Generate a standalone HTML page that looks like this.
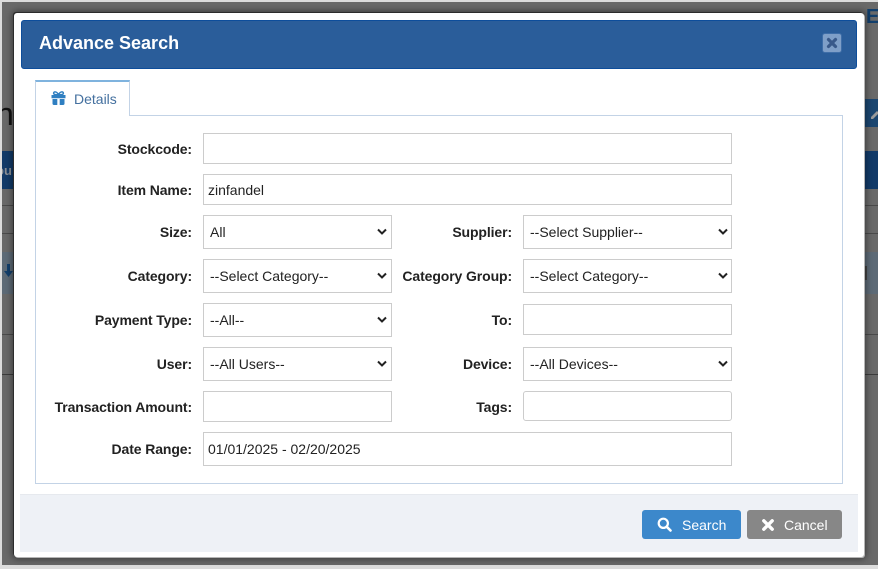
<!DOCTYPE html>
<html><head><meta charset="utf-8"><style>
html,body{margin:0;padding:0;width:878px;height:569px;overflow:hidden;background:#dcdcdc}
*{box-sizing:border-box}
body{font-family:"Liberation Sans",Arial,sans-serif;font-size:14px;color:#222;position:relative}
.a{position:absolute}
#bg{left:2px;top:2px;width:876px;height:563px;background:#696969;overflow:hidden}
#modal{left:14px;top:13px;width:850px;height:544px;background:#fff;border-radius:3px;box-shadow:-1px -1px 0 #2c2c2c,1px 1px 0 #b5b5b5,0 0 7px 2px rgba(0,0,0,.45)}
#hdr{left:21px;top:20px;width:836px;height:49px;background:#2a5d9a;border:1px solid #0d4d9b;border-radius:3px}
#ttl{left:39px;top:33px;font-size:18px;line-height:21px;font-weight:bold;color:#fff}
#x{left:822px;top:33px;width:20px;height:20px;background:#7f9fc8;border:1px solid #3f6ea8;border-radius:3px}
#pane{left:35px;top:115px;width:808px;height:369px;border:1px solid #c3d3e6;background:#fff}
#tab{left:35px;top:80px;width:95px;height:36px;background:#fff;border:1px solid #c3d3e6;border-top:2px solid #7fb3de;border-bottom:0}
#tabt{left:74px;top:91px;color:#44709f;font-size:14px;line-height:16px}
label{position:absolute;right:686px;font-weight:bold;font-size:14px;line-height:16px;color:#222;white-space:nowrap;letter-spacing:-.11px}
label.r{right:366px}
input,select{position:absolute;font-family:"Liberation Sans",Arial,sans-serif;font-size:14px;color:#222;background:#fff;border:1px solid #ccc;margin:0;outline:0}
input{padding:0 4px}
select{padding:0 0 0 6px;appearance:none;-webkit-appearance:none;border-radius:0}
.w{left:203px;width:529px}.l{left:203px;width:189px}.rr{left:523px;width:209px}
#foot{left:20px;top:494px;width:838px;height:58px;background:#eef1f6;border-top:1px solid #e6e9ee}
.btn{color:#fff;border-radius:3px;height:29px;line-height:30px;font-size:14px}
.c{position:absolute}
</style></head><body>
<div class="a" id="bg">
<div class="a" style="left:0;top:149px;width:876px;height:38px;background:#123a68"></div>
<div class="a" style="left:0;top:203px;width:876px;height:1px;background:#4a4a4a"></div>
<div class="a" style="left:0;top:231px;width:876px;height:1px;background:#4a4a4a"></div>
<div class="a" style="left:0;top:250px;width:876px;height:42px;background:#5d6a76"></div>
<div class="a" style="left:0;top:332px;width:876px;height:1px;background:#4a4a4a"></div>
<div class="a" style="left:0;top:372px;width:876px;height:1px;background:#3c3c3c"></div>
<div class="a" style="left:862px;top:97px;width:14px;height:28px;background:#1b4670"></div>
<div class="a" style="left:-6px;top:96px;font-size:32px;line-height:32px;color:#111">n</div>
<div class="a" style="left:-6px;top:161px;font-size:13px;line-height:16px;font-weight:bold;color:#8a8f96">ou</div>
<div class="a" style="left:5px;top:262px;width:3px;height:11px;background:#123f6c"></div>
<svg class="a" style="left:2px;top:268px" width="9" height="8" viewBox="0 0 9 8"><path d="M0 1h9L4.500 7z" fill="#123f6c"/></svg>
<svg class="a" style="left:868px;top:106px" width="8" height="14" viewBox="0 0 8 14"><path d="M1 9l6-6 2 2-6 6H1z" fill="#9a9a9a"/></svg>
<div class="a" style="left:862px;top:264px;width:3px;height:14px;background:#444"></div>
<div class="a" style="left:864px;top:4px;font-size:20px;line-height:22px;font-weight:bold;color:#123f6c">E</div>
</div>
<div class="a" id="modal"></div>
<div class="a" id="hdr"></div>
<div class="a" id="ttl">Advance Search</div>
<div class="a" id="x"><svg width="18" height="18" viewBox="0 0 18 18" style="display:block"><path d="M5.500 5.500L12.500 12.500M12.500 5.500L5.500 12.500" stroke="#39598a" stroke-width="3.200" stroke-linecap="round"/></svg></div>
<div class="a" id="pane"></div>
<div class="a" id="tab"></div>
<svg class="a" style="left:51px;top:91px" width="15" height="14" viewBox="0 0 15 14"><path d="M0.500 4h14v3.200H0.500zM1.500 8h4.800v6H3a1.500 1.500 0 0 1-1.500-1.500zM8.700 8h4.800v4.500A1.500 1.500 0 0 1 12 14H8.700zM6.300 4h2.400v3.200H6.300z" fill="#2f7fc1"/><path d="M7.500 3.800C6 .3 2.600 .2 2.600 2.200c0 1.400 2.300 1.600 4.900 1.600s4.900-.2 4.900-1.600c0-2-3.400-1.900-4.900 1.600z" fill="none" stroke="#2f7fc1" stroke-width="1.500"/></svg>
<div class="a" id="tabt">Details</div>

<label style="top:141px">Stockcode:</label>
<input class="w" style="top:133px;height:31px">
<label style="top:182px">Item Name:</label>
<input class="w" style="top:174px;height:31px" value="zinfandel">
<label style="top:224px">Size:</label>
<select class="l" style="top:215px;height:34px"><option>All</option></select>
<label class="r" style="top:224px">Supplier:</label>
<select class="rr" style="top:215px;height:34px"><option>--Select Supplier--</option></select>
<label style="top:268px">Category:</label>
<select class="l" style="top:259px;height:34px"><option>--Select Category--</option></select>
<label class="r" style="top:268px">Category Group:</label>
<select class="rr" style="top:259px;height:34px"><option>--Select Category--</option></select>
<label style="top:312px">Payment Type:</label>
<select class="l" style="top:303px;height:34px"><option>--All--</option></select>
<label class="r" style="top:312px">To:</label>
<input class="rr" style="top:304px;height:31px">
<label style="top:356px">User:</label>
<select class="l" style="top:347px;height:34px"><option>--All Users--</option></select>
<label class="r" style="top:356px">Device:</label>
<select class="rr" style="top:347px;height:34px"><option>--All Devices--</option></select>
<label style="top:399px">Transaction Amount:</label>
<input class="l" style="top:391px;height:31px">
<label class="r" style="top:399px">Tags:</label>
<input class="rr" style="top:391px;height:30px;border-radius:3px">
<label style="top:441px">Date Range:</label>
<input class="w" style="top:432px;height:34px" value="01/01/2025 - 02/20/2025">

<svg class="c" style="left:377px;top:228px" width="10" height="8" viewBox="0 0 10 8"><path d="M1 1.500L5 5.500 9 1.500" fill="none" stroke="#222" stroke-width="2"/></svg>
<svg class="c" style="left:377px;top:272px" width="10" height="8" viewBox="0 0 10 8"><path d="M1 1.500L5 5.500 9 1.500" fill="none" stroke="#222" stroke-width="2"/></svg>
<svg class="c" style="left:377px;top:316px" width="10" height="8" viewBox="0 0 10 8"><path d="M1 1.500L5 5.500 9 1.500" fill="none" stroke="#222" stroke-width="2"/></svg>
<svg class="c" style="left:377px;top:360px" width="10" height="8" viewBox="0 0 10 8"><path d="M1 1.500L5 5.500 9 1.500" fill="none" stroke="#222" stroke-width="2"/></svg>
<svg class="c" style="left:718px;top:228px" width="10" height="8" viewBox="0 0 10 8"><path d="M1 1.500L5 5.500 9 1.500" fill="none" stroke="#222" stroke-width="2"/></svg>
<svg class="c" style="left:718px;top:272px" width="10" height="8" viewBox="0 0 10 8"><path d="M1 1.500L5 5.500 9 1.500" fill="none" stroke="#222" stroke-width="2"/></svg>
<svg class="c" style="left:718px;top:360px" width="10" height="8" viewBox="0 0 10 8"><path d="M1 1.500L5 5.500 9 1.500" fill="none" stroke="#222" stroke-width="2"/></svg>

<div class="a" id="foot"></div>
<div class="a btn" style="left:642px;top:510px;width:99px;background:#3c88cb"><svg class="a" style="left:15px;top:7px" width="15" height="15" viewBox="0 0 15 15"><circle cx="6.300" cy="6.300" r="4.600" fill="none" stroke="#fff" stroke-width="2.200"/><path d="M9.800 9.800L13.500 13.500" stroke="#fff" stroke-width="2.600" stroke-linecap="round"/></svg><span class="a" style="left:40px;top:0">Search</span></div>
<div class="a btn" style="left:747px;top:510px;width:95px;background:#878787"><svg class="a" style="left:14px;top:8px" width="14" height="14" viewBox="0 0 14 14"><path d="M2.800 2.800L11.200 11.200M11.200 2.800L2.800 11.200" stroke="#fff" stroke-width="3.400" stroke-linecap="round"/></svg><span class="a" style="left:37px;top:0">Cancel</span></div>
</body></html>
